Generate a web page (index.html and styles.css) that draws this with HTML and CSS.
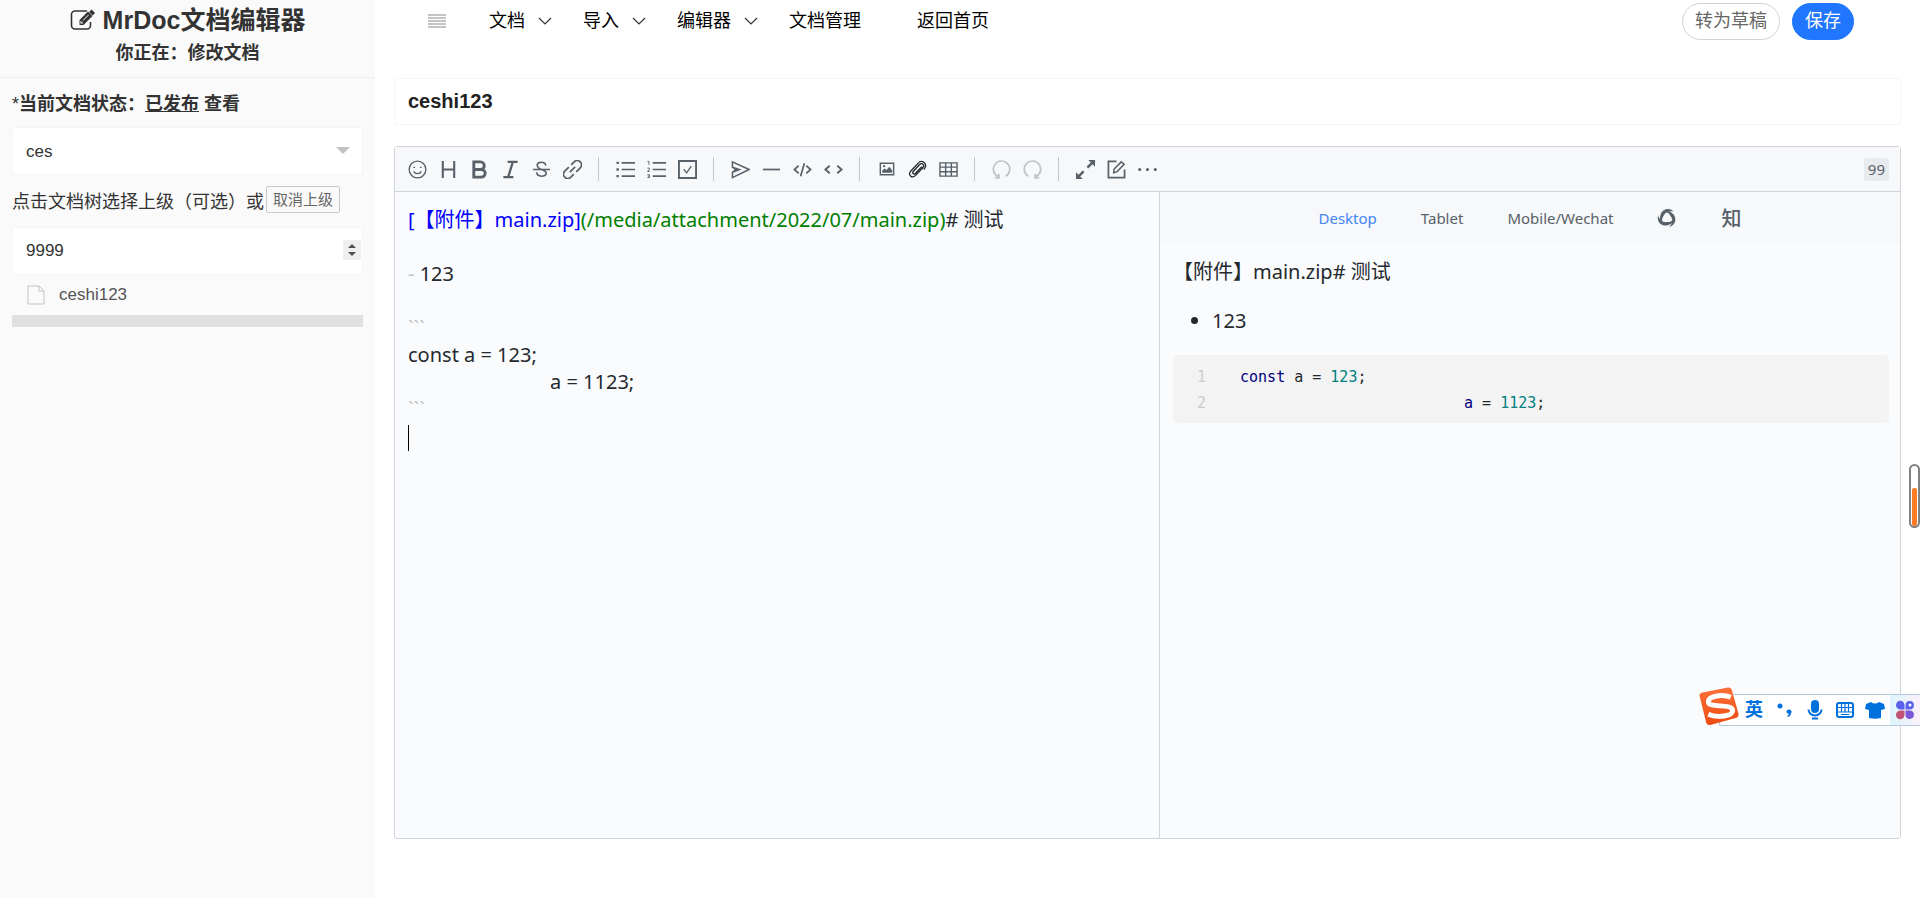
FILE: index.html
```html
<!DOCTYPE html>
<html lang="zh-CN">
<head>
<meta charset="utf-8">
<title>MrDoc文档编辑器</title>
<link rel="stylesheet" href="styles.css">
</head>
<body>
<div class="page">
  <aside class="sidebar">
    <header class="brand">
      <h1 class="brand-title">
        <svg class="brand-icon" viewBox="0 0 26 22" fill="none" stroke="currentColor" stroke-width="1.600"><path d="M17 2H5a3.500 3.500 0 0 0-3.500 3.500v11A3.500 3.500 0 0 0 5 20h12a3.500 3.500 0 0 0 3.500-3.500V13"/><path d="M9.500 16v-5L18 2.500l4.500 4.500-9 9z" fill="currentColor" stroke="none"/><path d="M20.300 1.700l3.500 3.500" stroke-width="3.500"/><path d="M13 11.500l5.500-5.500" stroke="#fafafa" stroke-width="1"/><path d="M11 12.200v1.800h2" stroke="#fafafa" stroke-width="1.200"/></svg>
        MrDoc文档编辑器</h1>
      <p class="brand-state">你正在：修改文档</p>
    </header>
    <form class="side-form">
      <p class="status"><span class="star">*</span><b>当前文档状态：<u>已发布</u> <a class="view" href="#">查看</a></b></p>
      <div class="select-wrap">
        <select class="field" aria-label="文集"><option>ces</option></select>
      </div>
      <p class="parent-row"><span>点击文档树选择上级（可选）或</span><button class="cancel" type="button">取消上级</button></p>
      <div class="number-wrap">
        <input class="field" type="text" inputmode="numeric" value="9999" aria-label="排序">
        <span class="spinner"><svg viewBox="0 0 18 20"><path d="M5 8l4-4 4 4zM5 12l4 4 4-4z" fill="#505050"/></svg></span>
      </div>
      <a class="tree-item" href="#">
        <svg class="tree-icon" viewBox="0 0 18 20" fill="none" stroke="#c0c4cc"><path d="M1 1h11l5 5v13H1z"/><path d="M12 1v5h5"/></svg>
        ceshi123</a>
      <div class="tree-bar"></div>
    </form>
  </aside>
  <main class="main">
    <nav class="topnav">
      <button class="burger" type="button" aria-label="菜单"><svg viewBox="0 0 18 16" stroke="#c4c4c4" stroke-width="2"><path d="M0 2h18M0 5h18M0 8h18M0 11h18M0 14h18"/></svg></button>
      <a class="nav-link" href="#">文档<svg class="chev" viewBox="0 0 14 8"><path d="M1 1l6 6 6-6"/></svg></a>
      <a class="nav-link" href="#">导入<svg class="chev" viewBox="0 0 14 8"><path d="M1 1l6 6 6-6"/></svg></a>
      <a class="nav-link" href="#">编辑器<svg class="chev" viewBox="0 0 14 8"><path d="M1 1l6 6 6-6"/></svg></a>
      <a class="nav-link" href="#">文档管理</a>
      <a class="nav-link home" href="#">返回首页</a>
      <div class="actions">
        <button class="pill" type="button">转为草稿</button>
        <button class="pill primary" type="button">保存</button>
      </div>
    </nav>
    <input class="title-input" type="text" value="ceshi123" aria-label="文档标题">
    <section class="editor">
      <div class="toolbar">
        <button type="button" class="tool" aria-label="emoji"><svg viewBox="0 0 20 20"><circle cx="10" cy="10" r="8.800" stroke-width="1.400"/><path d="M6 12c1.500 3.200 6.500 3.200 8 0" stroke-width="1.400"/><path d="M6.500 7v1.500M13.500 7v1.500" stroke-width="1.800"/></svg></button>
        <button type="button" class="tool" aria-label="标题"><svg viewBox="0 0 20 20" stroke-width="2.200"><path d="M4 1v18M16 1v18M4 10h12"/></svg></button>
        <button type="button" class="tool" aria-label="粗体"><svg viewBox="0 0 20 20"><path d="M4 2h7a4 4 0 0 1 0 8H4zM4 10h8a4 4 0 0 1 0 8H4z" stroke-width="3"/></svg></button>
        <button type="button" class="tool" aria-label="斜体"><svg viewBox="0 0 20 20"><path d="M7 2h10.500M2.500 18H13M12.500 2l-5 16" stroke-width="2.400"/></svg></button>
        <button type="button" class="tool" aria-label="删除线"><svg viewBox="0 0 20 20"><path d="M1 10h18M14.500 6c-.5-5-9-4.500-9-.5 0 2.500 2 3.500 4.500 4.500 3 1 5 2 5 4 0 4-10 4.500-10-1" stroke-width="1.700"/></svg></button>
        <button type="button" class="tool" aria-label="链接"><svg viewBox="0 0 20 20"><g transform="rotate(-45 10 10)" stroke-width="1.800"><path d="M9 5.500H3a4.500 4.500 0 0 0 0 9h4.500M11 14.500h6a4.500 4.500 0 0 0 0-9h-4.500M6 10h8"/></g></svg></button>
        <span class="sep"></span>
        <button type="button" class="tool" aria-label="列表"><svg viewBox="0 0 20 20"><path d="M6 3h14M6 10h14M6 17h14" stroke-width="1.700"/><path d="M.5 3h2.500M.5 10h2.500M.5 17h2.500" stroke-width="2.500"/></svg></button>
        <button type="button" class="tool" aria-label="有序列表"><svg viewBox="0 0 20 20"><path d="M6 3h14M6 10h14M6 17h14" stroke-width="1.700"/><path d="M.5 1.500H2V5M.5 8.500h2v1.500l-2 2h2.300M.5 15.500h2v3h-2M1 17h1.500" stroke-width="1"/></svg></button>
        <button type="button" class="tool" aria-label="任务列表"><svg viewBox="0 0 20 20"><path d="M1 1h18v18H1z" stroke-width="2"/><path d="M6 9.500l3 4 5-7" stroke-width="1.400"/></svg></button>
        <span class="sep"></span>
        <button type="button" class="tool" aria-label="引用"><svg viewBox="0 0 20 20"><path d="M1.500 2L19 10 1.500 18.500V13L9 10 1.500 7.500zM1.500 7.500L5 10l-3.500 3" stroke-width="1.600"/></svg></button>
        <button type="button" class="tool" aria-label="分割线"><svg viewBox="0 0 20 20"><path d="M1 10h18" stroke-width="1.800"/></svg></button>
        <button type="button" class="tool" aria-label="代码块"><svg viewBox="0 0 20 20"><path d="M6 6l-4.500 4L6 14M14 6l4.500 4-4.500 4M12 3.500L8 17" stroke-width="1.800"/></svg></button>
        <button type="button" class="tool" aria-label="行内代码"><svg viewBox="0 0 20 20"><path d="M6 6l-4.500 4L6 14M14 6l4.500 4-4.500 4" stroke-width="2"/></svg></button>
        <span class="sep"></span>
        <button type="button" class="tool" aria-label="图片"><svg viewBox="0 0 20 20"><path d="M3.500 3.500h14v12h-14z" stroke-width="1.500"/><path d="M5.500 13.500V11l2.500-2 2 1.500L13 7l3 4v2.500z" fill="currentColor" stroke="none"/><circle cx="7.500" cy="6.500" r="1.200" fill="currentColor" stroke="none"/></svg></button>
        <button type="button" class="tool dark" aria-label="附件"><svg viewBox="0 0 20 20"><path d="M14.500 7L8 14c-2 2-4-.3-2.300-2.200L12 5c2.800-2.800 6 .2 3.500 3.200l-7.500 8C4 20 -.5 15.500 3 11.500L11 3c3-3.200 8-.8 7.500 3.500-.2 1.500-1 2.500-2 3.500" stroke-width="1.400"/></svg></button>
        <button type="button" class="tool" aria-label="表格"><svg viewBox="0 0 20 20"><path d="M1 3h18v14H1zM1 7.500h18M1 12.300h18M7 3v14M13 3v14" stroke-width="1.500"/></svg></button>
        <span class="sep"></span>
        <button type="button" class="tool off" aria-label="撤销" disabled><svg viewBox="0 0 20 20"><path d="M6.500 17.500a8.600 8.600 0 1 1 8 -.5" stroke-width="1.800"/><path d="M3 18.500l4.500.2-.5-4" stroke-width="1.800"/></svg></button>
        <button type="button" class="tool off" aria-label="重做" disabled><svg viewBox="0 0 20 20"><path d="M13.500 17.500a8.600 8.600 0 1 0-8-.5" stroke-width="1.800"/><path d="M17 18.500l-4.500.2.500-4" stroke-width="1.800"/></svg></button>
        <span class="sep"></span>
        <button type="button" class="tool" aria-label="全屏"><svg viewBox="0 0 20 20"><path d="M12 8l5-5M8 12l-5 5" stroke-width="2.600"/><path d="M13 0h7v7zM0 13v7h7z" fill="currentColor" stroke="none"/></svg></button>
        <button type="button" class="tool" aria-label="编辑模式"><svg viewBox="0 0 20 20"><path d="M10 1.500H1.500v17h17V10" stroke-width="1.800"/><path d="M7 13.500l.5-4L15 2l3 2.500-7.500 8z" stroke-width="1.600"/></svg></button>
        <button type="button" class="tool" aria-label="更多"><svg viewBox="0 0 20 20" fill="currentColor"><g fill="currentColor" stroke="none"><circle cx="1.800" cy="10" r="1.600"/><circle cx="10" cy="10" r="1.600"/><circle cx="18.200" cy="10" r="1.600"/></g></svg></button>
        <span class="counter">99</span>
      </div>
      <div class="panes">
        <div class="source" contenteditable="true" spellcheck="false"><div><span class="lnk">[【附件】main.zip]</span><span class="url">(/media/attachment/2022/07/main.zip)</span># 测试</div><div><br></div><div><span class="mark">-</span> 123</div><div><br></div><div class="mark">```</div><div>const a = 123;</div><div class="indent">a = 1123;</div><div class="mark">```</div><div class="caret-line"></div></div>
        <div class="preview">
          <div class="tabs">
            <button type="button" class="tab active">Desktop</button>
            <button type="button" class="tab">Tablet</button>
            <button type="button" class="tab">Mobile/Wechat</button>
            <button type="button" class="tab" aria-label="公众号"><svg class="tab-icon" viewBox="0 0 20 20" fill="currentColor"><path id="blade" d="M3.500 7C5 1 12-1 16.500 3.500 12.500 2.500 8 3.500 6.500 8 5 10 4.500 13 6 16 2.500 14 2.500 10 3.500 7z"/><use href="#blade" transform="rotate(120 10 10)"/><use href="#blade" transform="rotate(240 10 10)"/></svg></button>
            <button type="button" class="tab zhi">知</button>
          </div>
          <article class="article">
            <p>【附件】main.zip# 测试</p>
            <ul><li>123</li></ul>
            <div class="code"><ol class="nums"><li>1</li><li>2</li></ol><pre><code><span class="kw">const</span> a = <span class="num">123</span>;
<span class="code-indent"></span><span class="kw">a</span> = <span class="num">1123</span>;</code></pre></div>
          </article>
        </div>
      </div>
    </section>
  </main>
</div>
<div class="gauge"><div class="gauge-fill"></div></div>
<div class="ime">
  <svg class="ime-logo" viewBox="0 0 40 40"><defs><linearGradient id="og" x1="0" y1="0" x2="0" y2="1"><stop offset="0" stop-color="#fb7138"/><stop offset="1" stop-color="#ee4b12"/></linearGradient></defs><path d="M2 6L29 .5q3-.5 4 2l7 25q.5 3-2 4L11 39q-3 .5-4-2L0 9q-.5-2 2-3z" fill="url(#og)"/><path d="M32 10.500C24 7 9 9 9 15.500c0 6.500 25 1 25 8.500 0 6-16 8-25 4" fill="none" stroke="#fff" stroke-width="5"/></svg>
  <div class="ime-bar">
    <span class="ime-lang">英</span>
    <svg viewBox="0 0 20 20"><circle cx="5" cy="6" r="2.500"/><path d="M11.500 11.500a2.500 2.500 0 1 1 4.500 2q-.5 3-3.500 3.500v-1.500q1.500-.5 1.500-1.700-2.500 0-2.500-2.300z"/></svg>
    <svg viewBox="0 0 20 20"><rect x="6" y="0" width="8" height="13" rx="4"/><path d="M3.500 9.500a6.500 6 0 0 0 13 0M7 18.500h6" fill="none" stroke="#0070dc" stroke-width="2"/></svg>
    <svg viewBox="0 0 20 20"><rect x="2" y="3" width="16" height="14" rx="2" fill="none" stroke="#0070dc" stroke-width="2"/><path d="M3 7.500h14M3 12h14M6.500 4v8M10 4v8M13.500 4v8M6 14.500h8" fill="none" stroke="#0070dc" stroke-width="1.200"/></svg>
    <svg viewBox="0 0 20 20"><path d="M6 2q4 3 8 0l5 2 1 5-4 1v8q-6 1.500-12 0v-8L0 9l1-5z"/></svg>
    <span class="ime-more"><svg viewBox="0 0 20 20"><path d="M1 5a4 4 0 0 1 8.500 0v4.500H5A4.200 4.200 0 0 1 1 5z" fill="#5b62ee"/><path d="M10.500 5A4.200 4.200 0 1 1 15 9.500h-4.500z" fill="#5b62ee"/><path d="M1 15a4.200 4.200 0 0 1 4-4.500h4.500V15A4.200 4.200 0 0 1 1 15z" fill="#c05578"/><path d="M10.500 10.500H15a4.200 4.200 0 1 1-4.500 4.500z" fill="#7c55d8"/><circle cx="15" cy="5" r="1.500" fill="#fff"/></svg></span>
  </div>
</div>
</body>
</html>
```
FILE: styles.css
```css
* { box-sizing: border-box; }
body { margin: 0; background: #fff; color: #333; font-family: "Liberation Sans", "Noto Sans CJK SC", sans-serif; font-size: 18px; text-spacing-trim: space-all; }
button, input, select { font: inherit; margin: 0; }
button { cursor: pointer; padding: 0; border: 0; background: none; color: inherit; }
a { color: inherit; text-decoration: none; }
svg { display: block; }
p, h1, ul, ol, pre { margin: 0; padding: 0; }

.page { display: flex; min-height: 100vh; }
.sidebar { width: 375px; flex: none; background: #fafafa; }
.brand { height: 78px; padding-top: 3px; border-bottom: 1px solid #eee; text-align: center; }
.brand-title { display: flex; justify-content: center; align-items: center; gap: 7px; font-size: 25px; line-height: 34px; }
.brand-icon { width: 26px; height: 22px; }
.brand-state { font-weight: bold; line-height: 32px; }
.side-form { padding: 12px 12px 0 12px; }
.status { line-height: 28px; }
.view { font-weight: bold; }
.select-wrap, .number-wrap { position: relative; }
.select-wrap { margin-top: 9px; }
.select-wrap::after { content: ""; position: absolute; right: 13px; top: 20px; border: 7px solid transparent; border-top-color: #c2c2c2; border-bottom: 0; }
.field { appearance: none; display: block; width: 100%; height: 48px; padding: 0 13px; border: 1px solid #f5f5f5; border-radius: 2px; background: #fff; color: #333; font-size: 17px; }
.parent-row { display: flex; align-items: center; gap: 2px; height: 52px; padding-bottom: 3px; white-space: nowrap; }
.cancel { height: 27px; padding: 0 6px; border: 1px solid #c9c9c9; border-radius: 2px; color: #666; font-size: 15px; line-height: 24px; }
.spinner { position: absolute; right: 2px; top: 13px; width: 18px; height: 20px; background: #efefef; }
.tree-item { display: flex; align-items: center; gap: 14px; height: 40px; padding-left: 15px; color: #555; font-size: 17px; }
.tree-icon { width: 18px; height: 20px; }
.tree-bar { height: 12px; background: #e0e0e0; }

.main { flex: 1; min-width: 0; display: flex; flex-direction: column; padding: 0 19px 59px; }
.topnav { display: flex; align-items: center; height: 42px; padding-left: 34px; color: #000; }
.burger { margin-right: 43px; }
.burger svg { width: 18px; height: 16px; }
.nav-link { display: flex; align-items: center; gap: 13px; margin-right: 31px; line-height: 28px; }
.home { margin-left: 25px; }
.chev { width: 14px; height: 8px; fill: none; stroke: #333; stroke-width: 1.2; }
.actions { display: flex; gap: 12px; margin: 0 47px 0 auto; }
.pill { height: 37px; padding: 0 12px; border: 1px solid #d2d2d2; border-radius: 19px; color: #666; line-height: 33px; }
.primary { border-color: #2176ff; background: #2176ff; color: #fff; }
.title-input { height: 47px; margin-top: 36px; padding: 0 13px; border: 1px solid #f5f5f5; border-radius: 2px; color: #222; font-size: 20px; font-weight: bold; }

.editor { flex: 1; display: flex; flex-direction: column; margin-top: 21px; border: 1px solid #d1d5da; border-radius: 3px; background: #fafbfd; color: #24292e; font-family: "Noto Sans", "Noto Sans CJK SC", sans-serif; }
.toolbar { display: flex; align-items: center; height: 45px; padding: 0 11px 0 7px; border-bottom: 1px solid #d1d5da; background: #f6f8fa; }
.tool { display: grid; place-items: center; width: 31px; height: 36px; color: #586069; }
.tool svg { width: 19px; height: 19px; fill: none; stroke: currentColor; }
.dark { color: #24292e; }
.off { color: #c0c4c8; }
.sep { width: 1px; height: 24px; margin: 0 11px 0 10px; background: #c3c7cb; }
.counter { margin-left: auto; padding: 0 4px; border-radius: 3px; background: #e8ebee; color: #586069; font-size: 15px; line-height: 23px; }
.panes { flex: 1; display: grid; grid-template-columns: minmax(0, 764fr) minmax(0, 741fr); }
.source { padding: 14px 13px; font-size: 20px; outline: 0; }
.source > div { height: 27px; line-height: 27px; white-space: pre; }
.lnk { color: #00f; }
.url { color: #008000; }
.source .mark { color: #c0c4c8; }
.source .indent { padding-left: 142px; }
.source .caret-line { width: 1px; height: 26px; margin-top: 3px; background: #000; }
.preview { border-left: 1px solid #d1d5da; }
.tabs { display: flex; align-items: center; justify-content: center; gap: 44px; height: 51px; background: #f6f8fa; color: #586069; font-size: 15px; }
.active { color: #4285f4; }
.tab-icon { width: 20px; height: 20px; }
.zhi { font-size: 20px; font-weight: 500; }
.article { padding: 14px 11px 0 13px; font-size: 20px; line-height: 30px; }
.article ul { padding-left: 39px; margin-top: 19px; }
.code { display: flex; gap: 34px; margin-top: 19px; padding: 9px 24px 7px; border-radius: 5px; background: #f3f3f3; font-family: "DejaVu Sans Mono", monospace; font-size: 15px; line-height: 26px; }
.code .nums { list-style: none; color: #ccc; }
.code pre, .code code { font-family: inherit; }
.code-indent { display: inline-block; width: 224px; }
.kw { color: #000080; }
.num { color: #008080; }

.gauge { position: fixed; right: 0; top: 464px; width: 11px; height: 64px; padding: 0 1px; border: 2px solid #808080; border-radius: 6px; display: flex; align-items: flex-end; background: #fff; }
.gauge-fill { width: 100%; height: 38px; border-radius: 2px; background: #ff7b26; }
.ime { position: fixed; right: 0; top: 687px; width: 221px; display: flex; align-items: flex-end; }
.ime-logo { position: relative; z-index: 1; width: 40px; height: 39px; flex: none; }
.ime-bar { flex: 1; display: flex; align-items: center; gap: 10px; height: 32px; margin-left: -20px; padding-left: 25px; border: 1px solid #b5c9e0; border-right: 0; background: #fff; fill: #0070dc; }
.ime-bar svg { width: 20px; height: 20px; flex: none; }
.ime-lang { width: 20px; color: #0070dc; font-weight: bold; line-height: 28px; }
.ime-more { display: grid; place-items: center; flex: none; width: 30px; height: 30px; margin-left: -5px; background: linear-gradient(90deg, #dcf5fb, #fbf0fa); }
```
